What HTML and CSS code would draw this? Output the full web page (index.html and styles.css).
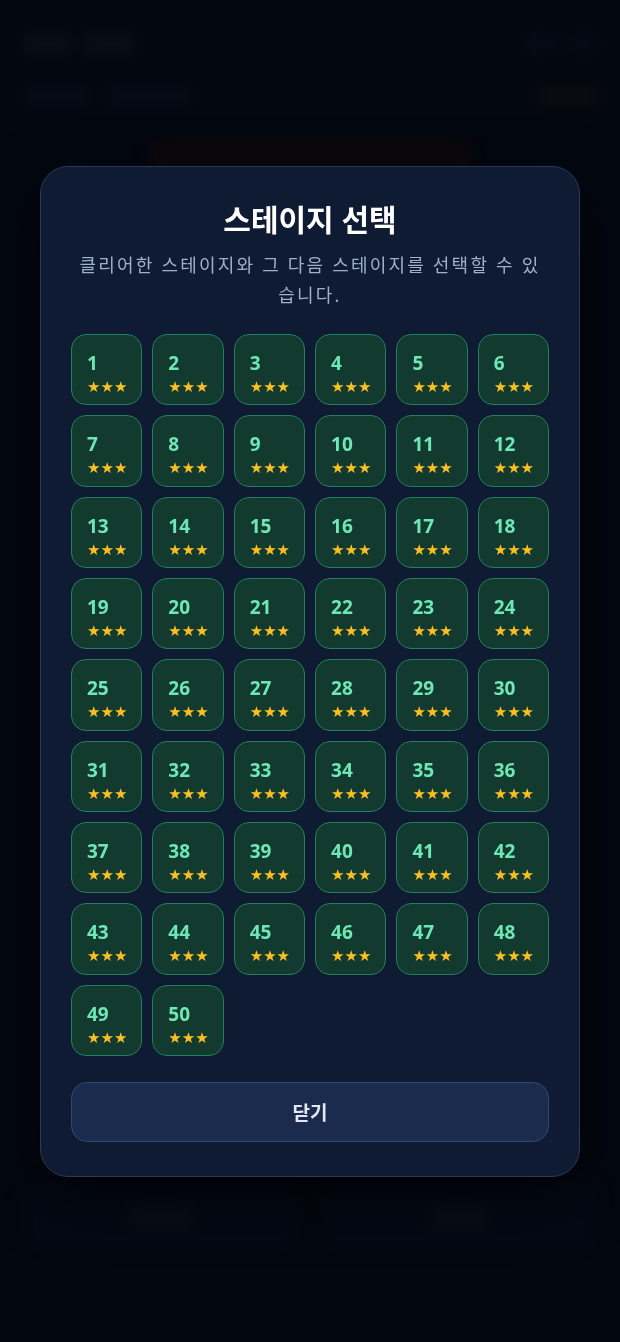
FILE: index.html
```html
<!DOCTYPE html>
<html lang="ko">

<head>
  <meta charset="UTF-8">
  <meta name="viewport" content="width=device-width, initial-scale=1.0">
  <title>스테이지 선택</title>
  <link rel="stylesheet" href="styles.css">
</head>

<body>
  <!-- blurred game screen behind the dialog -->
  <div class="backdrop">
    <div class="top-bar">
      <span class="blob w50"></span>
      <span class="blob w50"></span>
      <span class="spacer"></span>
      <span class="blob dim w30"></span>
      <span class="blob dim w30"></span>
    </div>
    <div class="sub-bar">
      <span class="blob dim w70"></span>
      <span class="blob dim w90"></span>
      <span class="spacer"></span>
      <span class="blob warm w60"></span>
    </div>
    <div class="alert"></div>
    <div class="bottom-bar">
      <div class="pad"><span class="blob w60"></span></div>
      <div class="pad"><span class="blob w60"></span></div>
    </div>
  </div>

  <div class="overlay">
    <div class="modal">
      <h2 class="modal-title">스테이지 선택</h2>
      <p class="modal-desc">클리어한 스테이지와 그 다음 스테이지를 선택할 수 있습니다.</p>
      <div class="stage-grid" id="grid"></div>
      <button class="close-btn">닫기</button>
    </div>
  </div>

  <script>
    const grid = document.getElementById('grid');
    for (let i = 1; i <= 50; i++) {
      const tile = document.createElement('button');
      tile.className = 'stage';
      tile.innerHTML = '<span class="num">' + i + '</span><span class="stars">★★★</span>';
      grid.appendChild(tile);
    }
  </script>
</body>

</html>
```

FILE: styles.css
```css
body {
  margin: 0;
  height: 1342px;
  background-color: #060a14;
  font-family: "Noto Sans", "Noto Sans CJK KR", sans-serif;
  overflow: hidden;
}

/* Background app (blurred) */
.backdrop {
  height: 100%;
  filter: blur(7px);
  padding: 34px 22px;
  box-sizing: border-box;
  display: flex;
  flex-direction: column;
}

.top-bar,
.sub-bar {
  display: flex;
  align-items: center;
  gap: 12px;
}

.sub-bar {
  margin-top: 32px;
}

.spacer {
  flex: 1;
}

.blob {
  display: block;
  height: 20px;
  border-radius: 6px;
  background-color: #161a26;
}

.blob.dim {
  background-color: #0c1222;
}

.blob.warm {
  background-color: #141512;
}

.w30 { width: 30px; }
.w50 { width: 50px; }
.w60 { width: 60px; }
.w70 { width: 70px; }
.w90 { width: 90px; }

.alert {
  margin: 34px auto 0;
  width: 320px;
  height: 36px;
  border-radius: 12px;
  background-color: #1d0b0f;
}

.bottom-bar {
  margin-top: auto;
  margin-bottom: 56px;
  display: flex;
  gap: 20px;
}

.pad {
  flex: 1;
  height: 70px;
  border-radius: 14px;
  background-color: #080e1c;
  display: flex;
  align-items: center;
  justify-content: center;
}

/* Dialog */
.overlay {
  position: fixed;
  inset: 0;
  background-color: rgba(2, 5, 12, 0.55);
  display: flex;
  justify-content: center;
  align-items: flex-start;
  padding-top: 166px;
}

.modal {
  width: 540px;
  box-sizing: border-box;
  background-color: #0f1a33;
  border: 1px solid #2c3a58;
  border-radius: 28px;
  padding: 33px 30px 34px;
  text-align: center;
  box-shadow: 0 20px 60px rgba(0, 0, 0, 0.6);
}

.modal-title {
  margin: 0;
  font-size: 30px;
  line-height: 40px;
  font-weight: 700;
  color: #ffffff;
}

.modal-desc {
  margin: 10px 0 0;
  padding: 0 8px;
  font-size: 18px;
  line-height: 30px;
  letter-spacing: 2.2px;
  color: #9fb0c8;
}

.stage-grid {
  margin-top: 24px;
  display: grid;
  grid-template-columns: repeat(6, 1fr);
  gap: 10px;
}

.stage {
  aspect-ratio: 1;
  box-sizing: border-box;
  background-color: #133a2e;
  border: 1px solid #23805e;
  border-radius: 15px;
  padding: 15px 0 0 15px;
  display: flex;
  flex-direction: column;
  align-items: flex-start;
  font-family: inherit;
  cursor: pointer;
}

.num {
  font-size: 19px;
  font-weight: 700;
  line-height: 26px;
  color: #6ee7b7;
}

.stars {
  margin-top: 3px;
  font-size: 15px;
  line-height: 17px;
  color: #fbbf24;
  font-family: "DejaVu Sans", sans-serif;
}

.close-btn {
  margin-top: 26px;
  width: 100%;
  height: 60px;
  background-color: #1a2b4d;
  border: 1px solid #34476c;
  border-radius: 16px;
  color: #e2e8f0;
  font-family: inherit;
  font-size: 19px;
  font-weight: 700;
  cursor: pointer;
}
```
